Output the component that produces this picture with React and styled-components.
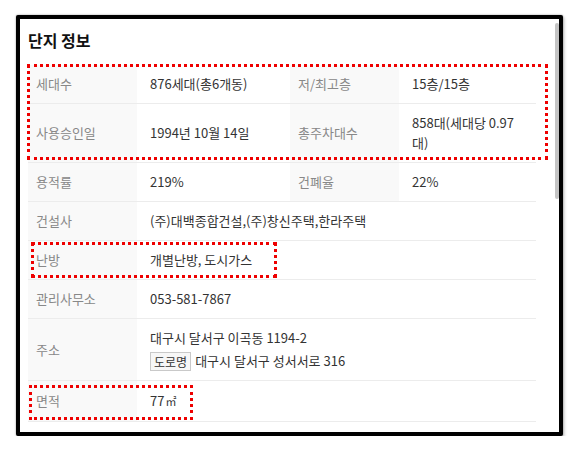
import { styled, createGlobalStyle } from 'styled-components';

const GlobalStyle = createGlobalStyle`
  body {
    margin: 0;
    background: #fff;
    font-family: "Noto Sans CJK KR", "Noto Sans", sans-serif;
  }
`;

const rows = [
  { type: 'pair', cells: [['세대수', '876세대(총6개동)'], ['저/최고층', '15층/15층']] },
  { type: 'pair', cells: [['사용승인일', '1994년 10월 14일'], ['총주차대수', '858대(세대당 0.97대)']] },
  { type: 'pair', cells: [['용적률', '219%'], ['건폐율', '22%']] },
  { type: 'wide', label: '건설사', value: '(주)대백종합건설,(주)창신주택,한라주택' },
  { type: 'wide', label: '난방', value: '개별난방, 도시가스' },
  { type: 'wide', label: '관리사무소', value: '053-581-7867' },
];

const App = () => {
  return (
    <>
      <GlobalStyle />
      <Frame>
        <Content>
          <Title>단지 정보</Title>
          <Table>
            <colgroup>
              <col width="109" />
              <col width="153" />
              <col width="109" />
              <col width="137" />
            </colgroup>
            <tbody>
              {rows.map((row, i) =>
                row.type === 'pair' ? (
                  <tr key={i}>
                    <Th>{row.cells[0][0]}</Th>
                    <Td>{row.cells[0][1]}</Td>
                    <Th>{row.cells[1][0]}</Th>
                    <Td>{row.cells[1][1]}</Td>
                  </tr>
                ) : (
                  <tr key={i}>
                    <Th>{row.label}</Th>
                    <Td colSpan={3}>{row.value}</Td>
                  </tr>
                )
              )}
              <tr>
                <Th>주소</Th>
                <Td colSpan={3}>
                  <div>대구시 달서구 이곡동 1194-2</div>
                  <RoadLine>
                    <Badge>도로명</Badge>
                    대구시 달서구 성서서로 316
                  </RoadLine>
                </Td>
              </tr>
              <tr>
                <Th $tall>면적</Th>
                <Td colSpan={3}>
                  77<Unit>㎡</Unit>
                </Td>
              </tr>
            </tbody>
          </Table>
        </Content>
        <Thumb />
        <Mark $left={7} $top={45} $w={521} $h={96} />
        <Mark $left={11} $top={223} $w={246} $h={36} />
        <Mark $left={9} $top={366} $w={164} $h={35} />
      </Frame>
    </>
  );
};

const Frame = styled.div`
  position: relative;
  box-sizing: border-box;
  width: 547px;
  height: 421px;
  margin: 15px 0 0 16px;
  border: 4px solid #000;
  border-radius: 2px;
  background: #fff;
  box-shadow: 0 0 2px rgba(0, 0, 0, 0.45), 2px 2px 3px rgba(0, 0, 0, 0.15);
  overflow: hidden;
`;

const Content = styled.div`
  padding: 8px 0 0 8px;
`;

const Title = styled.h2`
  margin: 0 0 12px;
  font-size: 16px;
  line-height: 26px;
  font-weight: 700;
  color: #111;
`;

const Table = styled.table`
  width: 508px;
  border-collapse: collapse;
  table-layout: fixed;
  font-size: 13px;
  line-height: 20px;
`;

const Th = styled.th`
  padding: ${({ $tall }) => ($tall ? '10px' : '9px')} 8px;
  border-bottom: 1px solid #ececec;
  background: #f9f9f9;
  color: #888;
  font-weight: 400;
  text-align: left;
  vertical-align: middle;
`;

const Td = styled.td`
  padding: 9px 13px;
  border-bottom: 1px solid #ececec;
  color: #333;
  vertical-align: middle;
  word-break: normal;
  line-break: anywhere;
`;

const RoadLine = styled.div`
  margin-top: 3px;
  display: flex;
  align-items: center;
  gap: 4px;
`;

const Badge = styled.span`
  display: inline-block;
  padding: 0 3px;
  border: 1px solid #c9c9c9;
  background: #f7f7f7;
  font-size: 12px;
  line-height: 17px;
  color: #333;
`;

const Unit = styled.span`
  margin-left: 1px;
  font-size: 11px;
`;

const Thumb = styled.div`
  position: absolute;
  left: 535px;
  top: 4px;
  width: 4px;
  height: 176px;
  border-radius: 2px;
  background: #c4c4c4;
`;

const Mark = styled.div`
  position: absolute;
  left: ${({ $left }) => $left}px;
  top: ${({ $top }) => $top}px;
  width: ${({ $w }) => $w}px;
  height: ${({ $h }) => $h}px;
  box-sizing: border-box;
  border: 3px dotted #ee0000;
  pointer-events: none;
`;

export default App;
